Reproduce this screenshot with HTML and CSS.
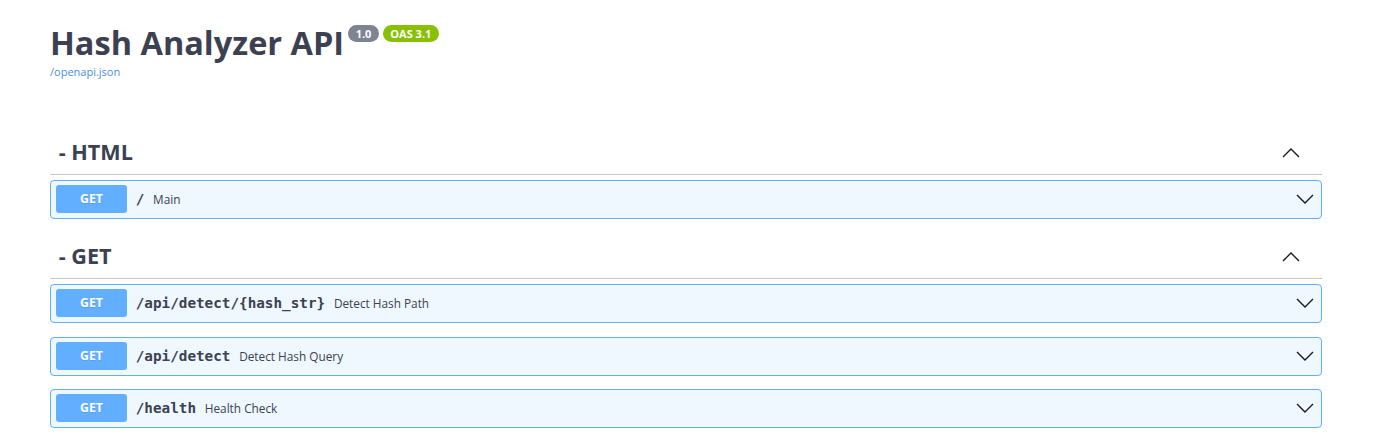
FILE: index.html
```html
<!DOCTYPE html>
<html lang="en">
<head>
<meta charset="utf-8">
<title>Hash Analyzer API - Swagger UI</title>
<link rel="stylesheet" href="styles.css">
</head>
<body>
<div class="page">
  <section class="info">
    <h1 class="title"><span class="title-text">Hash Analyzer API</span><span class="badge badge-version">1.0</span><span class="badge badge-oas">OAS 3.1</span></h1>
    <a class="spec-link" href="#">/openapi.json</a>
  </section>

  <section class="tag-section">
    <h3 class="tag"><span class="tag-name">- HTML</span><svg class="arrow" viewBox="0 0 20 20" width="20" height="20"><path d="M2 14 L10 6 L18 14" /></svg></h3>
    <div class="opblock">
      <span class="method">GET</span>
      <span class="path">/</span>
      <span class="desc">Main</span>
      <span class="spacer"></span>
      <svg class="arrow arrow-down" viewBox="0 0 20 20" width="20" height="20"><path d="M2 6 L10 14 L18 6" /></svg>
    </div>
  </section>

  <section class="tag-section">
    <h3 class="tag"><span class="tag-name">- GET</span><svg class="arrow" viewBox="0 0 20 20" width="20" height="20"><path d="M2 14 L10 6 L18 14" /></svg></h3>
    <div class="opblock">
      <span class="method">GET</span>
      <span class="path">/api/detect/{hash_str}</span>
      <span class="desc">Detect Hash Path</span>
      <span class="spacer"></span>
      <svg class="arrow arrow-down" viewBox="0 0 20 20" width="20" height="20"><path d="M2 6 L10 14 L18 6" /></svg>
    </div>
    <div class="opblock">
      <span class="method">GET</span>
      <span class="path">/api/detect</span>
      <span class="desc">Detect Hash Query</span>
      <span class="spacer"></span>
      <svg class="arrow arrow-down" viewBox="0 0 20 20" width="20" height="20"><path d="M2 6 L10 14 L18 6" /></svg>
    </div>
    <div class="opblock">
      <span class="method">GET</span>
      <span class="path">/health</span>
      <span class="desc">Health Check</span>
      <span class="spacer"></span>
      <svg class="arrow arrow-down" viewBox="0 0 20 20" width="20" height="20"><path d="M2 6 L10 14 L18 6" /></svg>
    </div>
  </section>
</div>
</body>
</html>
```

FILE: styles.css
```css
html, body {
  margin: 0;
  padding: 0;
  background: #ffffff;
}

body {
  font-family: "Open Sans", "Noto Sans", sans-serif;
  color: #3b4151;
}

.page {
  width: 1272px;
  margin-left: 50px;
}

.info {
  padding-top: 25px;
  margin-bottom: 54.5px;
}

.title {
  display: flex;
  align-items: flex-start;
  margin: 0;
  height: 36px;
  font-size: 32.5px;
  line-height: 36px;
  font-weight: 700;
  color: #3b4151;
}

.title-text {
  display: block;
}

.badge {
  display: block;
  margin-top: 0;
  margin-left: 4px;
  height: 17px;
  padding: 0 7.5px;
  border-radius: 57px;
  font-size: 11px;
  line-height: 17px;
  font-weight: 700;
  color: #ffffff;
}

.badge-version {
  background: #7d8492;
}

.badge-oas {
  background: #89bf04;
}

.spec-link {
  display: block;
  margin-top: 3.5px;
  height: 14px;
  font-size: 11px;
  line-height: 14px;
  color: #4990e2;
  text-decoration: none;
}

.tag-section {
  display: flex;
  flex-direction: column;
  margin-bottom: 4.5px;
}

.tag {
  display: flex;
  align-items: center;
  margin: 0 0 5px 0;
  height: 37px;
  padding: 0 21.3px 4px 8.75px;
  border-bottom: 1px solid #c4c6cb;
  font-size: 21.6px;
  font-weight: 700;
  color: #3b4151;
}

.tag-name {
  flex: 1;
}

.arrow {
  display: block;
  fill: none;
  stroke: #1b1b1b;
  stroke-width: 1.4;
}

.tag .arrow {
  margin-top: 2px;
}

.opblock {
  display: flex;
  align-items: center;
  margin-bottom: 13.5px;
  padding: 4px 5px 5px 5px;
  border: 1px solid #61affe;
  border-radius: 4px;
  background: #eff7ff;
}

.method {
  display: block;
  width: 71px;
  height: 28px;
  line-height: 28px;
  border-radius: 3px;
  background: #61affe;
  color: #ffffff;
  font-size: 12.25px;
  font-weight: 700;
  text-align: center;
  text-shadow: 0 1px 0 rgba(0, 0, 0, 0.1);
}

.path {
  padding: 0 8.75px;
  font-family: "DejaVu Sans Mono", monospace;
  font-size: 14.3px;
  font-weight: 700;
  color: #3b4151;
}

.desc {
  font-size: 11.8px;
  color: #3b4151;
}

.spacer {
  flex: 1;
}

.arrow-down {
  margin-right: 1.3px;
}
```
